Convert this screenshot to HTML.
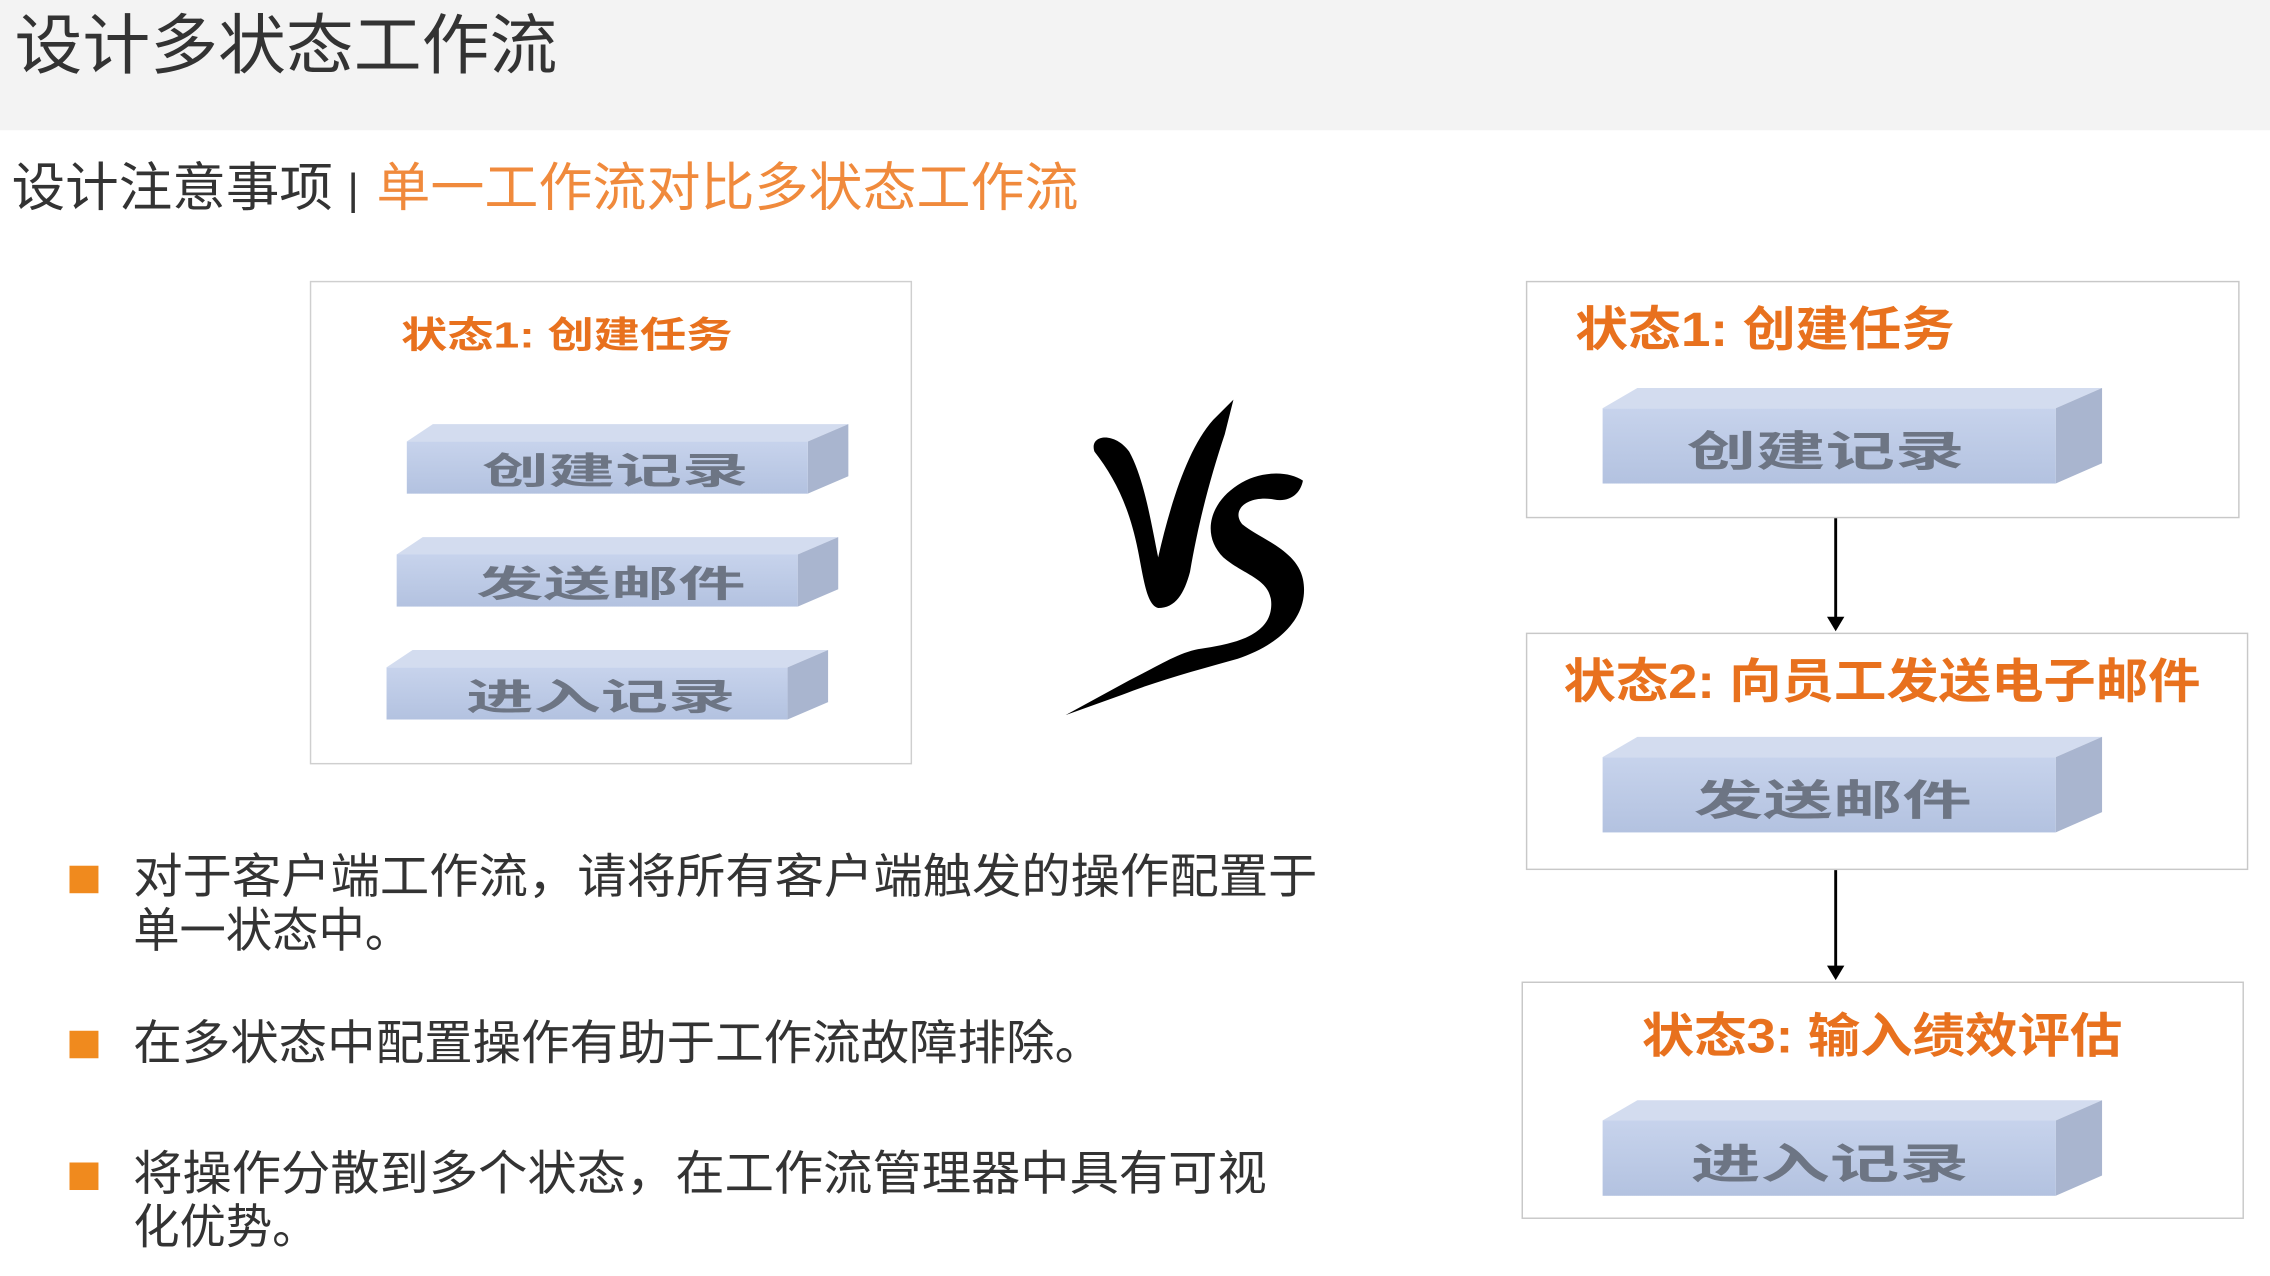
<!DOCTYPE html>
<html><head><meta charset="utf-8"><style>
html,body{margin:0;padding:0;background:#fff;}
svg{display:block;}
text{font-family:"Liberation Sans","Noto Sans CJK SC",sans-serif;}
</style></head><body>
<svg width="2270" height="1276" viewBox="0 0 1568 881.4" xmlns="http://www.w3.org/2000/svg">
<defs>
<linearGradient id="gf" x1="0" y1="0" x2="0" y2="1"><stop offset="0" stop-color="#c7d3ec"/><stop offset="1" stop-color="#b3c2e0"/></linearGradient>
<g id="bar">
<polygon points="0,12 18,0 305,0 277,12" fill="#d3dcef"/>
<polygon points="277,12 305,0 305,36 277,48" fill="#a9b5cf"/>
<rect x="0" y="12" width="277" height="36" fill="url(#gf)"/>
</g>
<g id="bar2">
<polygon points="0,14 24,0 345,0 313,14" fill="#d3dcef"/>
<polygon points="313,14 345,0 345,52 313,66" fill="#a9b5cf"/>
<rect x="0" y="14" width="313" height="52" fill="url(#gf)"/>
</g>
</defs>
<rect x="0" y="0" width="1568" height="90" fill="#f3f3f3"/>
<text x="10" y="47" font-size="45" fill="#333" textLength="375" lengthAdjust="spacingAndGlyphs">设计多状态工作流</text>
<text x="8" y="142" font-size="36" fill="#333" textLength="222" lengthAdjust="spacingAndGlyphs">设计注意事项</text>
<text x="240" y="141" font-size="30" fill="#333">|</text>
<text x="260" y="142" font-size="36" fill="#f08a3c" textLength="485" lengthAdjust="spacingAndGlyphs">单一工作流对比多状态工作流</text>

<rect x="214.5" y="194.5" width="415" height="333" fill="#fff" stroke="#cfcfcf"/>
<text x="277" y="240" font-size="25" font-weight="bold" fill="#e8711e" textLength="229" lengthAdjust="spacingAndGlyphs">状态1: 创建任务</text>
<use href="#bar" x="281" y="293"/>
<text x="333" y="334" font-size="25" font-weight="bold" fill="#6d7584" textLength="184" lengthAdjust="spacingAndGlyphs">创建记录</text>
<use href="#bar" x="274" y="371"/>
<text x="329" y="412" font-size="25" font-weight="bold" fill="#6d7584" textLength="186" lengthAdjust="spacingAndGlyphs">发送邮件</text>
<use href="#bar" x="267" y="449"/>
<text x="322" y="490" font-size="25" font-weight="bold" fill="#6d7584" textLength="186" lengthAdjust="spacingAndGlyphs">进入记录</text>

<g fill="#000">
<path d="M756,312 C752,300 770,298 780,312 C790,330 795,360 800,385 C808,350 820,310 838,290 L852,276 L846,300 C836,330 828,360 822,395 C818,410 812,420 800,420 C792,418 790,400 786,380 C780,350 770,330 756,312 Z"/>
<path d="M900,332 C890,325 870,325 855,335 C835,348 830,370 845,385 C860,398 880,400 878,420 C876,440 850,445 830,448 C815,450 800,460 780,470 L736,494 L775,480 C800,470 830,462 855,455 C885,445 905,425 900,400 C896,380 870,372 858,362 C850,352 862,342 880,345 C890,347 898,342 900,332 Z"/>
</g>

<rect x="48" y="598" width="20" height="19" fill="#f08a1e"/>
<text x="92" y="617" font-size="33" fill="#333" textLength="818" lengthAdjust="spacingAndGlyphs">对于客户端工作流，请将所有客户端触发的操作配置于</text>
<text x="92" y="654" font-size="33" fill="#333" textLength="192" lengthAdjust="spacingAndGlyphs">单一状态中。</text>
<rect x="48" y="712" width="20" height="19" fill="#f08a1e"/>
<text x="92" y="732" font-size="33" fill="#333" textLength="670" lengthAdjust="spacingAndGlyphs">在多状态中配置操作有助于工作流故障排除。</text>
<rect x="48" y="803" width="20" height="19" fill="#f08a1e"/>
<text x="92" y="822" font-size="33" fill="#333" textLength="783" lengthAdjust="spacingAndGlyphs">将操作分散到多个状态，在工作流管理器中具有可视</text>
<text x="92" y="859" font-size="33" fill="#333" textLength="128" lengthAdjust="spacingAndGlyphs">化优势。</text>

<rect x="1054.5" y="194.5" width="492" height="163" fill="#fff" stroke="#c8c8c8"/>
<text x="1088" y="239" font-size="33" font-weight="bold" fill="#e8711e" textLength="262" lengthAdjust="spacingAndGlyphs">状态1: 创建任务</text>
<use href="#bar2" x="1107" y="268"/>
<text x="1165" y="322" font-size="29" font-weight="bold" fill="#6d7584" textLength="192" lengthAdjust="spacingAndGlyphs">创建记录</text>
<line x1="1268" y1="358" x2="1268" y2="428" stroke="#000" stroke-width="2"/>
<polygon points="1262,426 1274,426 1268,436" fill="#000"/>

<rect x="1054.5" y="437.5" width="498" height="163" fill="#fff" stroke="#c8c8c8"/>
<text x="1080" y="482" font-size="33" font-weight="bold" fill="#e8711e" textLength="440" lengthAdjust="spacingAndGlyphs">状态2: 向员工发送电子邮件</text>
<use href="#bar2" x="1107" y="509"/>
<text x="1170" y="563" font-size="29" font-weight="bold" fill="#6d7584" textLength="192" lengthAdjust="spacingAndGlyphs">发送邮件</text>
<line x1="1268" y1="601" x2="1268" y2="669" stroke="#000" stroke-width="2"/>
<polygon points="1262,667 1274,667 1268,677" fill="#000"/>

<rect x="1051.5" y="678.5" width="498" height="163" fill="#fff" stroke="#c8c8c8"/>
<text x="1134" y="727" font-size="33" font-weight="bold" fill="#e8711e" textLength="332" lengthAdjust="spacingAndGlyphs">状态3: 输入绩效评估</text>
<use href="#bar2" x="1107" y="760"/>
<text x="1168" y="814" font-size="29" font-weight="bold" fill="#6d7584" textLength="192" lengthAdjust="spacingAndGlyphs">进入记录</text>
</svg>
</body></html>
